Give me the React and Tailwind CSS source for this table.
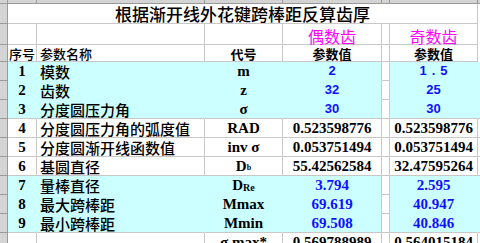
import React from 'react';

const CJK = { fontFamily: '"Noto Sans CJK SC", "Noto Sans", sans-serif' };
const SERIF = { fontFamily: '"Liberation Serif", "Times New Roman", serif' };
const SANS = { fontFamily: '"Liberation Sans", Arial, sans-serif' };

const rows = [
  { n: '1', label: '模数', code: 'm', d: '2', f: '1.5', cyan: true, sans: true },
  { n: '2', label: '齿数', code: 'z', d: '32', f: '25', cyan: true, sans: true },
  { n: '3', label: '分度圆压力角', code: 'σ', d: '30', f: '30', cyan: true, sans: true },
  { n: '4', label: '分度圆压力角的弧度值', code: 'RAD', d: '0.523598776', f: '0.523598776' },
  { n: '5', label: '分度圆渐开线函数值', code: 'inv σ', d: '0.053751494', f: '0.053751494' },
  { n: '6', label: '基圆直径', code: <>D<sub className="text-[8px]">b</sub></>, d: '55.42562584', f: '32.47595264' },
  { n: '7', label: '量棒直径', code: <>D<span className="text-[10px] relative top-[2px]">Re</span></>, d: '3.794', f: '2.595', cyan: true },
  { n: '8', label: '最大跨棒距', code: 'Mmax', d: '69.619', f: '40.947', cyan: true },
  { n: '9', label: '最小跨棒距', code: 'Mmin', d: '69.508', f: '40.846', cyan: true },
];

// rows 1-3 and 7-9 are one cyan block each, no inner gridlines
const edgeB = (i) => rows[i].cyan && rows[i + 1] && rows[i + 1].cyan;

const RowHead = ({ h }) => (
  <div className={`w-[8px] shrink-0 bg-[#d4d4d4] border-r border-b border-[#9a9a9a] ${h}`} />
);

const App = () => {
  return (
    <div className="w-[480px] h-[243px] overflow-hidden bg-white text-black select-none">
      {/* column header strip, mostly cut off */}
      <div className="flex h-[4px] bg-[#d4d4d4] border-b border-[#9a9a9a]">
        <div className="w-[8px] border-r border-[#9a9a9a]" />
        <div className="w-[29px] border-r border-[#9a9a9a]" />
        <div className="w-[168px] border-r border-[#9a9a9a]" />
        <div className="w-[78px] border-r border-[#9a9a9a]" />
        <div className="w-[99px] border-r border-[#9a9a9a]" />
        <div className="w-[8px] border-r border-[#9a9a9a]" />
        <div className="w-[88px] border-r border-[#9a9a9a]" />
      </div>

      {/* title */}
      <div className="flex h-[20px]">
        <RowHead h="h-[20px]" />
        <div
          className="w-[470px] border-r border-b border-[#c8c8c8] flex items-center justify-center text-[17px] font-medium leading-none"
          style={CJK}
        >
          根据渐开线外花键跨棒距反算齿厚
        </div>
      </div>

      {/* even / odd */}
      <div className="flex h-[21px]">
        <RowHead h="h-[21px]" />
        <div className="w-[29px] border-r border-b border-[#c8c8c8]" />
        <div className="w-[168px] border-r border-b border-[#c8c8c8]" />
        <div className="w-[78px] border-r border-b border-[#c8c8c8]" />
        <div className="w-[99px] border-r border-b border-[#c8c8c8] flex items-center justify-center pt-[3px] text-[16px] leading-[16px] text-[#ff00ff]" style={CJK}>
          偶数齿
        </div>
        <div className="w-[8px] border-r border-b border-[#c8c8c8]" />
        <div className="w-[88px] border-r border-b border-[#c8c8c8] flex items-center justify-center pt-[3px] text-[16px] leading-[16px] text-[#ff00ff]" style={CJK}>
          奇数齿
        </div>
      </div>

      {/* headers */}
      <div className="flex h-[17px] text-[13px] leading-none font-bold" style={CJK}>
        <RowHead h="h-[17px]" />
        <div className="w-[29px] border-r border-b border-[#c8c8c8] flex items-center justify-center font-medium">序号</div>
        <div className="w-[168px] border-r border-b border-[#c8c8c8] flex items-center pl-[3px] font-medium">参数名称</div>
        <div className="w-[78px] border-r border-b border-[#c8c8c8] flex items-center justify-center">代号</div>
        <div className="w-[99px] border-r border-b border-[#c8c8c8] flex items-center justify-center">参数值</div>
        <div className="w-[8px] border-r border-b border-[#c8c8c8]" />
        <div className="w-[88px] border-r border-b border-[#c8c8c8] flex items-center justify-center">参数值</div>
      </div>

      {rows.map((r, i) => {
        const bb = edgeB(i) ? 'border-b-[#ccffff]' : 'border-b-[#c8c8c8]';
        const inner = r.cyan ? 'bg-[#ccffff] border-r-[#ccffff]' : 'bg-white border-r-[#c8c8c8]';
        const fcell = r.cyan ? 'bg-[#ccffff] border-r-[#ccffff]' : 'bg-white border-r-[#c8c8c8]';
        const val = r.cyan ? 'text-[#1010ff]' : 'text-black';
        const valFont = r.sans ? SANS : SERIF;
        const valSize = r.sans ? 'text-[13px]' : 'text-[15px]';
        return (
          <div key={r.n} className="flex h-[19px]">
            <RowHead h="h-[19px]" />
            <div className={`w-[29px] border-r border-b ${inner} ${bb} flex items-center justify-center text-[15px] font-bold`} style={SERIF}>
              {r.n}
            </div>
            <div className={`w-[168px] border-r border-b ${inner} ${bb} flex items-center pl-[3px] text-[15px] font-medium leading-none whitespace-nowrap`} style={CJK}>
              {r.label}
            </div>
            <div className={`w-[78px] border-r border-b ${inner} ${bb} flex items-center justify-center text-[15px] font-bold whitespace-nowrap`} style={SERIF}>
              {r.code}
            </div>
            <div className={`w-[99px] border-r border-b ${r.cyan ? 'bg-[#ccffff] border-r-[#c8c8c8]' : 'bg-white border-r-[#c8c8c8]'} ${bb} flex items-center justify-center ${valSize} font-bold ${val}`} style={valFont}>
              {r.d}
            </div>
            <div className="w-[8px] border-r border-b border-[#c8c8c8] bg-white" />
            <div className={`w-[88px] border-r border-b ${fcell} ${bb} flex items-center justify-center ${valSize} font-bold ${val} ${r.f === '1.5' ? 'tracking-[5px] pl-[5px]' : ''}`} style={valFont}>
              {r.f}
            </div>
            <div className={`flex-1 border-b ${r.cyan ? 'bg-[#ccffff]' : ''} ${bb}`} />
          </div>
        );
      })}

      {/* row 10, cut off at the bottom */}
      <div className="flex h-[19px] text-[15px] font-bold" style={SERIF}>
        <RowHead h="h-[19px]" />
        <div className="w-[29px] border-r border-b border-[#c8c8c8]" />
        <div className="w-[168px] border-r border-b border-[#c8c8c8]" />
        <div className="w-[78px] border-r border-b border-[#c8c8c8] flex items-center justify-center whitespace-nowrap">σ max*</div>
        <div className="w-[99px] border-r border-b border-[#c8c8c8] flex items-center justify-center">0.569788989</div>
        <div className="w-[8px] border-r border-b border-[#c8c8c8]" />
        <div className="w-[88px] border-r border-b border-[#c8c8c8] flex items-center justify-center">0.564015184</div>
      </div>
    </div>
  );
};

export default App;
